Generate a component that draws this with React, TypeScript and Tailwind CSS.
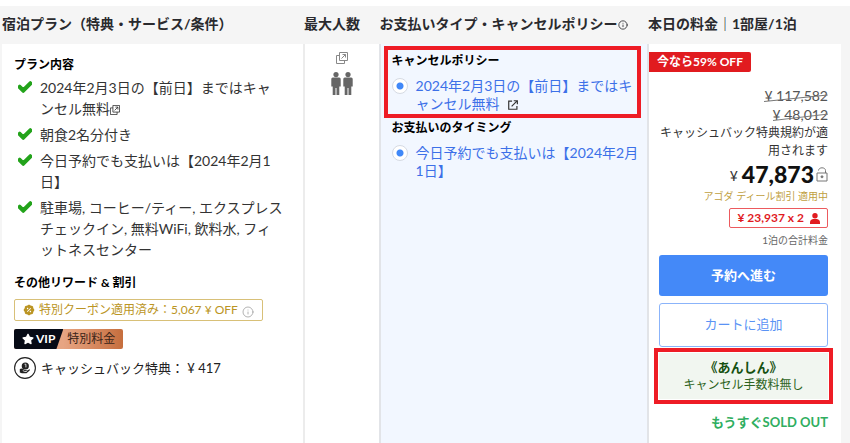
import { ReactNode } from 'react';
import { Info } from 'lucide-react';
import { FaCheck, FaStar } from 'react-icons/fa';
import { RiDiscountPercentFill } from 'react-icons/ri';

const benefits: ReactNode[] = [
  <>2024年2月3日の【前日】まではキャ<br />ンセル無料<PopupIcon className="inline-block w-[10px] h-[10px]" /></>,
  <>朝食2名分付き</>,
  <>今日予約でも支払いは【2024年2月1<br />日】</>,
  <>駐車場, コーヒー/ティー, エクスプレス<br />チェックイン, 無料WiFi, 飲料水, フィ<br />ットネスセンター</>,
];

function PopupIcon({ className }: { className?: string }) {
  return (
    <svg viewBox="0 0 12 12" fill="none" stroke="currentColor" className={className}>
      <path d="M3.5 .5h8v8h-8z" />
      <path d="M3.5 3.5h-3v8h8v-3" />
      <path d="M5.5 6.5l4-4M6.5 2.5h3v3" />
    </svg>
  );
}

function ExternalIcon({ className }: { className?: string }) {
  return (
    <svg viewBox="0 0 11 11" fill="none" stroke="currentColor" strokeWidth="1.3" className={className}>
      <path d="M4.5 1.2H.8v9h9V6.5" />
      <path d="M4 7l6-6M6.3 .8h4v4" />
    </svg>
  );
}

function Adult() {
  return (
    <svg viewBox="0 0 10 23" fill="currentColor" className="w-[10px] h-[23px]">
      <circle cx="5" cy="2.6" r="2.6" />
      <path d="M1.800 5.600h6.400a1.500 1.500 0 0 1 1.500 1.500V14.500H8.300V23H5.500v-7h-1v7H1.700v-8.500H.3V7.100a1.500 1.500 0 0 1 1.500-1.500z" />
    </svg>
  );
}

function PersonIcon() {
  return (
    <svg viewBox="0 0 10 11" fill="currentColor" className="w-[10px] h-[11px]">
      <circle cx="5" cy="2.700" r="2.700" />
      <path d="M0 11V9.500C0 7.500 1.500 6.400 3 6.100h4c1.500.3 3 1.400 3 3.400V11z" />
    </svg>
  );
}

function OpenLockIcon() {
  return (
    <svg viewBox="0 0 12 15" fill="none" stroke="currentColor" className="w-3 h-[15px]">
      <path d="M1 6h10v8H1z" />
      <path d="M2.500 3.500C2.800 1.700 4.100 .8 6 .8S9.500 1.800 9.500 3.500V6" />
      <circle cx="6" cy="9.800" r="1" fill="currentColor" />
    </svg>
  );
}

function CashbackIcon() {
  return (
    <svg viewBox="0 0 22 22" fill="none" className="w-[22px] h-[22px]">
      <circle cx="11" cy="11" r="10.400" stroke="#222" strokeWidth="1.100" />
      <circle cx="11.300" cy="9" r="3.600" fill="#222" />
      <path d="M5.800 12l2.200-.4 3 1.500 2.400.4 2.300-1.500v1.600l-3.200 2.600H7.900l-2.100-.6z" fill="#222" />
      <path d="M10.500 7.200h1.400v3.200M8.800 13.600l2 .9h2" stroke="#fff" strokeWidth=".8" />
    </svg>
  );
}

function PolicyOption({ id, children }: { id: string, children: ReactNode }) {
  return (
    <div className="flex items-start gap-2 mt-2">
      <input
        type="radio"
        id={id}
        name={id}
        defaultChecked
        className="appearance-none shrink-0 w-4 h-4 mt-px rounded-full border border-[#d5dae3] bg-white checked:bg-[radial-gradient(circle,#4088f8_3px,#fff_4px)]"
      />
      <label htmlFor={id} className="text-sm leading-[18px] text-[#3c70e8] whitespace-nowrap">
        {children}
      </label>
    </div>
  );
}

function OldPrice({ children }: { children: ReactNode }) {
  return (
    <div className="flex justify-end">
      <s className="relative no-underline text-sm leading-[19px] text-[#555]">
        {children}
        <svg viewBox="0 0 60 8" preserveAspectRatio="none" className="absolute left-0 top-2 w-full h-2">
          <path d="M0 7.500L60 1" stroke="#777" fill="none" />
        </svg>
      </s>
    </div>
  );
}

export default function App() {
  return (
    <div lang="ja" className="min-h-screen bg-[#f5f5f5] border-t-[6px] border-white pl-[2px] pr-[9px] font-[Lato,'Noto_Sans_CJK_JP',sans-serif] text-[#333]">
      <table className="w-full table-fixed border-collapse">
        <thead>
          <tr className="h-[38px] text-left text-sm leading-[20px] text-[#2a2a2e] whitespace-nowrap">
            <th className="w-[36%] p-0 pb-[2px] font-bold">宿泊プラン（特典・サービス/条件）</th>
            <th className="w-[9%] p-0 pb-[2px] font-bold">最大人数</th>
            <th className="w-[32%] p-0 pb-[2px] font-bold">
              お支払いタイプ・キャンセルポリシー<Info className="inline-block w-[10px] h-[10px]" />
            </th>
            <th className="p-0 pb-[2px] font-bold">本日の料金｜1部屋/1泊</th>
          </tr>
        </thead>
        <tbody>
          <tr className="align-top">
            {/* Plan */}
            <td className="bg-white pt-[13px] pl-3">
              <h3 className="text-xs leading-4 font-bold text-black">プラン内容</h3>
              <ul className="mt-1 flex flex-col gap-[5px] pl-1">
                {benefits.map((benefit, i) => (
                  <li key={i} className="flex gap-2 text-sm leading-[21px] whitespace-nowrap">
                    <FaCheck className="shrink-0 w-[14px] h-[14px] mt-[3px] text-[#23a31b] stroke-[#23a31b] stroke-[50px]" />
                    <span>{benefit}</span>
                  </li>
                ))}
              </ul>
              <h3 className="mt-[15px] text-xs leading-4 font-bold text-black">その他リワード & 割引</h3>
              <div className="mt-2 w-fit h-[22px] flex items-center gap-1 px-2 border border-[#d8c078] rounded-[2px] text-xs text-[#bb9524] whitespace-nowrap">
                <RiDiscountPercentFill className="w-3 h-3" />
                <span>特別クーポン適用済み：5,067 ¥ OFF</span>
                <Info className="w-3 h-3 mt-1 text-[#999]" strokeWidth={1.5} />
              </div>
              <div className="mt-2 w-fit h-5 flex rounded-[2px] overflow-hidden bg-linear-to-r from-[#e7a583] from-45% to-[#c66e3d] text-xs whitespace-nowrap">
                <div className="flex items-center gap-[2px] pl-2 pr-2 bg-[#070b16] text-white font-bold [clip-path:polygon(0_0,100%_0,86%_100%,0_100%)]">
                  <FaStar className="w-3 h-3" />
                  VIP
                </div>
                <div className="flex items-center pl-1 pr-2 text-[#3b2418]">特別料金</div>
              </div>
              <div className="mt-2 flex items-center gap-[5px] text-[13px] leading-[22px] text-[#222]">
                <CashbackIcon />
                <span>キャッシュバック特典： ¥ 417</span>
              </div>
            </td>

            {/* Capacity */}
            <td className="bg-white border-l-2 border-[#ececec] pt-2">
              <div className="flex flex-col items-center gap-2 text-[#666]">
                <PopupIcon className="w-3 h-3 text-[#888]" />
                <div className="flex gap-[2px]">
                  <Adult />
                  <Adult />
                </div>
              </div>
            </td>

            {/* Payment and cancellation */}
            <td className="bg-[#f2f7ff] border-l-2 border-[#e2e4e8] pt-[2px] pl-[3px] pr-[6px]">
              <section className="border-4 border-[#ee1c25] pt-[3px] pb-px pl-1">
                <h3 className="text-xs leading-4 font-bold text-black">キャンセルポリシー</h3>
                <PolicyOption id="cancel-policy">
                  2024年2月3日の【前日】まではキ<br />ャンセル無料
                  <ExternalIcon className="inline-block w-[10px] h-[10px] ml-2 text-[#333]" />
                </PolicyOption>
              </section>
              <section className="mt-[2px] pl-2">
                <h3 className="text-xs leading-4 font-bold text-black">お支払いのタイミング</h3>
                <PolicyOption id="payment-timing">
                  今日予約でも支払いは【2024年2月<br />1日】
                </PolicyOption>
              </section>
            </td>

            {/* Price */}
            <td className="bg-white border-l-2 border-[#e2e4e8] pt-2 pb-3">
              <div className="w-fit h-5 px-2 rounded-r-[2px] bg-[#e11b1f] text-white text-xs leading-5 font-bold">
                今なら59% OFF
              </div>
              <div className="mt-[14px] pl-[10px] pr-[13px] text-right whitespace-nowrap">
                <OldPrice>¥ 117,582</OldPrice>
                <OldPrice>¥ 48,012</OldPrice>
                <p className="text-xs leading-[18px]">キャッシュバック特典規約が適<br />用されます</p>
                <div className="mt-[2px] flex items-center justify-end leading-6">
                  <span className="text-sm mr-1 mt-1">¥</span>
                  <strong className="text-[23px] font-black text-[#111]">47,873</strong>
                  <span className="ml-[2px] text-[#777]"><OpenLockIcon /></span>
                </div>
                <p className="mt-[2px] text-[10px] leading-4 text-[#c0a040]">アゴダ ディール割引 適用中</p>
                <div className="mt-1 ml-auto w-fit h-5 flex items-center gap-[6px] px-[7px] border border-[#ec5a5e] rounded-[2px] text-xs font-bold text-[#e11b1f]">
                  ¥ 23,937 x 2
                  <PersonIcon />
                </div>
                <p className="mt-1 text-[10px] leading-4 text-[#666]">1泊の合計料金</p>
                <button className="block mt-[7px] w-full h-[41px] rounded-[3px] bg-[#4489f8] text-white text-[13px] font-bold cursor-pointer">
                  予約へ進む
                </button>
                <button className="block mt-[7px] w-full h-11 rounded-[3px] border border-[#8bb4fa] bg-white text-[#5a93f5] text-[13px] cursor-pointer">
                  カートに追加
                </button>
                <div className="-mx-[5px] mt-px border-4 border-[#ee1c25] p-px">
                  <div className="py-[5px] bg-[#f1f6f0] text-center text-xs leading-[18px] text-[#2c6320]">
                    <p className="text-[13px] leading-[18px] font-bold text-[#155010]">《あんしん》</p>
                    <p>キャンセル手数料無し</p>
                  </div>
                </div>
                <p className="mt-2 text-[13px] leading-5 font-bold text-[#2fae60]">もうすぐSOLD OUT</p>
              </div>
            </td>
          </tr>
        </tbody>
      </table>
    </div>
  );
}
